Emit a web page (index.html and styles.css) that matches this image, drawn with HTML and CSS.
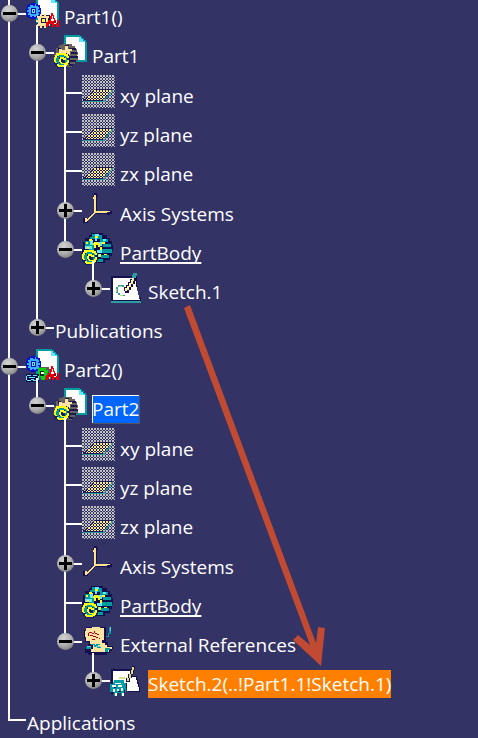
FILE: index.html
```html
<!DOCTYPE html>
<html lang="en">
<head>
  <meta charset="UTF-8">
  <meta name="viewport" content="width=device-width, initial-scale=1.0">
  <title>Specification tree</title>
  <link rel="stylesheet" href="styles.css">
</head>
<body>
<svg class="sprites" aria-hidden="true" shape-rendering="crispEdges">
  <defs>
    <pattern id="dither" width="3" height="3" patternUnits="userSpaceOnUse">
      <path fill="#c0c0c0" d="M0 0h2v2H0zM2 2h1v1H2z"/>
    </pattern>
    <pattern id="dither-khaki" width="3" height="3" patternUnits="userSpaceOnUse">
      <path fill="#1a1a55" d="M0 0h3v3H0z"/>
      <path fill="#ffe88c" d="M0 0h2v2H0zM2 2h1v1H2z"/>
    </pattern>

    <symbol id="paper" viewBox="0 0 33 33">
      <path fill="#009ca0" d="M10 0h16v1h2v2h2v2h2v2h1v20H10z"/>
      <path fill="#fff" d="M12 2h13v5h6v18H12z"/>
      <path fill="#62e6ff" d="M25 2h2v2h2v2h2v1h-6z"/>
    </symbol>

    <symbol id="gear-blue" viewBox="0 0 33 33">
      <path fill="#0010d0" d="M5 7h5v1h2v1h2v3h1v6h-1v3h-2v1h-2v1H5v-1H3v-1H1v-3H0v-6h1V9h2V8h2z"/>
      <path fill="#38b0ff" d="M6 9h1v1h2V8h1v2h2v1h1v2h-1v1h2v2h-2v1h1v2h-1v1h-2v1H8v-1H6v1H4v-2H2v-2h1v-1H1v-2h2v-1H2v-2h2V9h2z"/>
      <path fill="#0010a0" d="M5 12h5v6H5z"/>
      <path fill="#70e8ff" d="M6 13h3v4H6z"/>
      <path fill="#0010a0" d="M7 14h1v2H7z"/>
    </symbol>

    <symbol id="rig-red" viewBox="0 0 33 33">
      <path fill="#f00000" d="M25 17h2v2h1v3h1v2h4v7h-3v-2h-2v2h-2v-3h-2v2h-2v1h-2v-5h2v-2h2v-4h1z"/>
      <path fill="#fff" d="M26 20h1v3h1v2h-3v-2h1zM30 24h1v3h-1zM23 28h1v2h-1zM28 27h2v1h-2z"/>
      <path fill="#850020" d="M22 26h2v1h-2zM28 25h2v2h-2zM31 26h1v2h-1zM25 29h1v2h-1z"/>
    </symbol>

    <!-- yellow spiral at the lower left of part and body icons -->
    <symbol id="spiral" viewBox="0 0 33 33">
      <path fill="#102060" d="M4 18h9v1h2v2h1v8h-2v2h-2v2H3v-2H1v-2H0v-8h2v-2h2z"/>
      <path fill="#009ca0" d="M4 20h7v1h2v7h-2v2H4v-2H2v-6h2z"/>
      <path fill="#102060" d="M5 22h6v6H5z"/>
      <path fill="#ffff18" d="M4 18h8v1h2v2h1v2h-2v-1h-1v-1h-2v-1H5v1H3v2H2v4h1v1H1v-1H0v-5h1v-2h1v-2h2zM6 22h4v1h2v2H9v-1H7v3h1v1h4v-1h1v-2h2v3h-1v2h-1v1h-2v1H4v-1H3v-2h2v1h5v-1H7v-1H6v-1H5v-3h1z"/>
    </symbol>

    <symbol id="product" viewBox="0 0 33 33">
      <use href="#paper"/>
      <use href="#gear-blue"/>
      <path fill="#1c1748" d="M12 19h12v12H12z"/>
      <path fill="#ffe3a0" d="M14 18h2v2h2v-2h2v2h3v2h-1v2h2v2h-2v2h1v2h-3v2h-2v-2h-2v2h-2v-2h-3v-2h1v-2h-2v-2h2v-2h-1v-2h3z"/>
      <path fill="#1c1748" d="M15 22h5v5h-5z"/>
      <path fill="#ffff40" d="M16 23h3v3h-3z"/>
      <use href="#rig-red"/>
    </symbol>

    <symbol id="product-linked" viewBox="0 0 33 33">
      <use href="#paper"/>
      <use href="#gear-blue"/>
      <path fill="#5c5c60" d="M13 18h10v2h2v10H13z"/>
      <path fill="#10d010" d="M12 19h8v2h2v3h-1v3h-2v4h-4v-3h-3z"/>
      <path fill="#102c20" d="M14 22h4v5h-4z"/>
      <path fill="#fff" d="M15 23h3v2h-3z"/>
      <path fill="#001048" d="M0 25h13v8H0z"/>
      <path fill="#70e8ff" d="M1 26h4v1H1zM7 26h4v1H7zM0 27h1v4H0zM12 27h1v4h-1zM1 31h4v1H1zM7 31h4v1H7zM3 28h6v1H3zM5 30h3v1H5z"/>
      <use href="#rig-red"/>
    </symbol>

    <symbol id="part" viewBox="0 0 33 33">
      <use href="#paper"/>
      <path fill="#66645c" d="M8 9h10v2h3v3h2v3h1v3h-1v3h1v3h-3v3h-3v3H8v-4H2v-5H0v-5h2v-5h3v-3h3z"/>
      <path fill="#1b1850" d="M11 10h4v1h-4zM4 13h3v3H4zM15 13h7v2h-7zM17 17h6v2h-6zM16 21h8v2h-8zM16 25h6v2h-6zM15 29h4v2h-4z"/>
      <path fill="#ffe3a0" d="M11 11h3v3h4v2h-2v4h-3v-2H9v2H7v-2H5v-4h3v1h3z"/>
      <use href="#spiral"/>
    </symbol>

    <symbol id="plane" viewBox="0 0 33 33">
      <path fill="url(#dither)" d="M0 0h33v33H0z"/>
      <path fill="#1a1a55" d="M12 14h18v1H12zM1 24h20v2H1z"/>
      <path fill="url(#dither-khaki)" d="M12 15h17v2h-2v2h-2v2h-2v2h-2v2H4v-2h2v-2h2v-2h2v-2h2z"/>
      <path fill="#1a1a55" d="M10 16h2v1h-2zM8 18h2v1H8zM6 20h2v1H6zM4 22h2v1H4z"/>
      <path fill="#30979f" d="M1 26h20v1H1zM21 25h2v2h-2zM23 23h1v2h-1zM24 21h2v2h-2zM26 19h2v2h-2zM28 17h1v2h-1zM29 15h2v2h-2z"/>
    </symbol>

    <symbol id="axis" viewBox="0 0 33 33">
      <path fill="#140f50" d="M12 0h3v2h1v2h-5V2h1zM14 4h1v14h-1zM14 20h12v-3h2v1h2v3h-2v1h-3v-1H14zM1 25h2v3h3v2H1zM10 20h3v2h-3zM8 22h2v2H8z"/>
      <path fill="#ffe38c" d="M12 2h2v16h11v2H13v1h-1v1h-1v1h-1v1H9v1H8v1H7v1H6v1H5v1H3v-4h2v1h1v-1h1v-1h1v-1h1v-1h1v-1h1v-1h1zM11 4h1v2h-1zM25 18h3v1h-3z"/>
    </symbol>

    <symbol id="body" viewBox="0 0 33 33">
      <path fill="#101050" d="M9 1h12v2h4v3h3v3h2v4h1v6h-1v5h-2v4h-5v3H2v-4H0V17h1v-7h2V6h4V3h2z"/>
      <path fill="#009ca0" d="M10 2h3v5H8V5h2zM15 3h5v4h-5zM18 7h8v3h-8zM21 12h8v3h-8zM19 17h11v4H19zM19 23h8v3h-8zM15 27h6v3h-6zM3 9h5v5H3zM7 13h5v5H7z"/>
      <path fill="#68e8ff" d="M13 2h4v2h-2v5h-2zM8 8h3v5H8zM16 10h4v4h-4zM3 14h7v3H3zM15 18h5v3h-5zM14 22h3v3h-3zM21 7h3v2h-3z"/>
      <path fill="#ffff18" d="M13 4h3v2h-3zM7 7h3v2H7zM4 10h2v2H4zM12 10h4v1h2v4h-2v-2h-2v3h-2v-3h-1v-2h1zM5 15h2v2H5zM20 10h3v2h-3zM18 15h2v3h-2zM17 22h2v3h-2zM22 22h3v1h-3z"/>
      <use href="#spiral"/>
    </symbol>

    <symbol id="sketch" viewBox="0 0 33 33">
      <path fill="#15104f" d="M1 5h26v22h4v3H1z"/>
      <path fill="#fff" d="M3 7h23v9h1v4h1v4h1v4h1v1H3z"/>
      <path fill="#309ca0" d="M1 30h30v2H1z"/>
      <path fill="#309ca0" d="M8 14h6v2H8zM6 16h2v6H6zM8 22h2v2H8zM11 24h4v1h-4z"/>
      <path fill="#c8d880" d="M6 18h1v3H6zM9 15h3v1H9zM10 24h3v1h-3z"/>
      <path fill="#15104f" d="M22 6h4v4h-1v3h-2v3h-2v3h-2v3h-4v-2h-1v-4h2v-2h2v-3h2V8h2z"/>
      <path fill="#fff2a0" d="M22 7h2v3h-1v3h-2v3h-2v3h-2v1h-2v-3h2v-2h2v-3h2V9h1z"/>
      <path fill="#309ca0" d="M23 2h4v3h-1v2h-4V4h1z"/>
    </symbol>

    <symbol id="external" viewBox="0 0 33 33">
      <path fill="#15104f" d="M4 3h20v15h2v4h5v3h-1v2h-2v2h-3v2H6v-2H3v-5h3v-4h1v-2H3v-4H2V6h2z"/>
      <path fill="#ffe3a0" d="M4 4h6V3h8v1h4v12h-2v3h3v2h2v2h5v2h-3v3H9v-3h2v-5H8v-3H4v-4H3V7h1z"/>
      <path fill="#b00020" d="M7 8h3v1H7zM6 9h1v3H6zM10 9h2v1h-2zM12 7h1v2h2v1h-2V9h-1zM15 10h2v1h-2zM8 11h3v1H8zM11 12h3v1h-3zM14 13h2v1h-2zM17 14h1v1h-1zM10 15h3v1h-3z"/>
      <path fill="#009ca0" d="M27 3h2v7h-2v3h-3v-1h2V9h1zM9 20h4v1h3v2h3v1h-4v-1h-3v-2H9zM4 23h5v2H4zM14 20h4v1h-4zM23 24h5v2h-2v2h-3z"/>
      <path fill="#62d0e6" d="M28 3h1v4h-1zM5 22h4v1H5zM14 22h4v1h-4z"/>
    </symbol>

    <symbol id="sketch-external" viewBox="0 0 33 33">
      <path fill="#15104f" d="M1 6h21v7h5v3h1v4h1v4h1v5H18v-4H1z"/>
      <path fill="#fff" d="M3 8h18v6h5v3h1v4h1v3h1v4H17v-8H3z"/>
      <path fill="#15104f" d="M22 3h3v4h-1v4h-2v4h-2v4h-4v-4h2v-4h2V7h2z"/>
      <path fill="#e0dc80" d="M22 4h2v3h-1v4h-2v4h-2v3h-2v-3h2v-4h2V7h1zM9 14h6v2H9z"/>
      <path fill="#009ca0" d="M4 17h10v3h2v9h-2v4h-3v-3H7v3H4v-4H0v-8h3z"/>
      <path fill="#fff" d="M5 20h6v1H5zM2 22h4v2H2zM8 22h4v2H8zM3 26h2v3H3zM7 26h2v2H7zM11 25h2v3h-2zM5 30h2v3H5zM12 30h2v3h-2z"/>
      <path fill="#15104f" d="M4 24h2v1H4zM8 28h3v1H8zM1 29h2v2H1zM14 27h1v3h-1z"/>
    </symbol>
  </defs>
</svg>

<main class="viewer">
  <ul class="tree">
    <li>
      <div class="row"><button class="knob" aria-label="Collapse Part1()"></button><svg class="icon"><use href="#product"/></svg><span class="label">Part1()</span></div>
      <ul>
        <li>
          <div class="row"><button class="knob" aria-label="Collapse Part1"></button><svg class="icon"><use href="#part"/></svg><span class="label">Part1</span></div>
          <ul class="features">
            <li><div class="row"><svg class="icon"><use href="#plane"/></svg><span class="label">xy plane</span></div></li>
            <li><div class="row"><svg class="icon"><use href="#plane"/></svg><span class="label">yz plane</span></div></li>
            <li><div class="row"><svg class="icon"><use href="#plane"/></svg><span class="label">zx plane</span></div></li>
            <li><div class="row"><button class="knob plus" aria-label="Expand Axis Systems"></button><svg class="icon"><use href="#axis"/></svg><span class="label">Axis Systems</span></div></li>
            <li>
              <div class="row"><button class="knob" aria-label="Collapse PartBody"></button><svg class="icon"><use href="#body"/></svg><span class="label in-work">PartBody</span></div>
              <ul>
                <li><div class="row"><button class="knob plus" aria-label="Expand Sketch.1"></button><svg class="icon"><use href="#sketch"/></svg><span class="label">Sketch.1</span></div></li>
              </ul>
            </li>
          </ul>
        </li>
        <li><div class="row"><button class="knob plus" aria-label="Expand Publications"></button><span class="label">Publications</span></div></li>
      </ul>
    </li>
    <li>
      <div class="row"><button class="knob" aria-label="Collapse Part2()"></button><svg class="icon"><use href="#product-linked"/></svg><span class="label">Part2()</span></div>
      <ul>
        <li>
          <div class="row"><button class="knob" aria-label="Collapse Part2"></button><svg class="icon"><use href="#part"/></svg><span class="label active">Part2</span></div>
          <ul class="features">
            <li><div class="row"><svg class="icon"><use href="#plane"/></svg><span class="label">xy plane</span></div></li>
            <li><div class="row"><svg class="icon"><use href="#plane"/></svg><span class="label">yz plane</span></div></li>
            <li><div class="row"><svg class="icon"><use href="#plane"/></svg><span class="label">zx plane</span></div></li>
            <li><div class="row"><button class="knob plus" aria-label="Expand Axis Systems"></button><svg class="icon"><use href="#axis"/></svg><span class="label">Axis Systems</span></div></li>
            <li><div class="row"><svg class="icon"><use href="#body"/></svg><span class="label in-work">PartBody</span></div></li>
            <li>
              <div class="row"><button class="knob" aria-label="Collapse External References"></button><svg class="icon"><use href="#external"/></svg><span class="label">External References</span></div>
              <ul>
                <li><div class="row"><button class="knob plus" aria-label="Expand Sketch.2"></button><svg class="icon"><use href="#sketch-external"/></svg><span class="label selected">Sketch.2(..!Part1.1!Sketch.1)</span></div></li>
              </ul>
            </li>
          </ul>
        </li>
      </ul>
    </li>
    <li><div class="row"><span class="label">Applications</span></div></li>
  </ul>

  <!-- link from the source sketch to its external reference -->
  <svg class="arrow" viewBox="0 0 142 361" aria-hidden="true">
    <path d="M0 3 6 0 132 338 134 322 141 323 137 361 109 335 114 330 126 340Z"/>
  </svg>
</main>
</body>
</html>
```
FILE: styles.css
```css
* {
  box-sizing: border-box;
}

body {
  margin: 0;
  background: #333366;
  color: #fff;
  font-family: "Open Sans", "Noto Sans", sans-serif;
  font-size: 19px;
  line-height: 28px;
  overflow: hidden;
}

.sprites {
  position: absolute;
  width: 0;
  height: 0;
}

/* view is scrolled a few pixels past the top of the tree */
.viewer {
  position: relative;
  margin-top: -6px;
  display: flow-root;
}

ul {
  list-style: none;
  margin: 0;
  padding: 0;
}

li {
  position: relative;
}

li ul {
  padding-left: 28px;
}

.features {
  padding-top: 1px;
}

.features > li:nth-child(3) {
  padding-bottom: 1px;
}

/* trunk line */
li::before {
  content: "";
  position: absolute;
  left: 8px;
  top: -8px;
  bottom: 0;
  width: 2px;
  background: #fff;
}

li:last-child::before {
  bottom: auto;
  height: 28px;
}

.row {
  position: relative;
  display: flex;
  align-items: center;
  height: 39px;
  padding-left: 26px;
}

/* branch line */
.row::before {
  content: "";
  position: absolute;
  left: 8px;
  top: 19px;
  width: 18px;
  height: 2px;
  background: #fff;
}

.knob {
  position: relative;
  flex: none;
  width: 17px;
  height: 17px;
  margin-left: -25px;
  margin-right: 8px;
  padding: 0;
  border: none;
  border-radius: 50%;
  background: radial-gradient(circle at 40% 30%, #d4d4d4 0, #acacac 50%, #707070 90%);
  cursor: pointer;
}

.knob::before,
.knob.plus::after {
  content: "";
  position: absolute;
  left: 2px;
  top: 7px;
  width: 13px;
  height: 3px;
  background: #000;
}

.knob.plus::after {
  left: 7px;
  top: 2px;
  width: 3px;
  height: 13px;
}

.icon {
  flex: none;
  width: 33px;
  height: 33px;
  margin-right: 4px;
  margin-bottom: 2px;
}

.label {
  margin-top: 7px;
  margin-left: 1px;
  white-space: nowrap;
}

.in-work {
  text-decoration: underline 2px;
  text-underline-offset: 2px;
  text-decoration-skip-ink: none;
}

.active {
  background: #0066ff;
  box-shadow: inset 1px 1px #fff, 1px 1px #555;
}

.selected {
  background: #ff8000;
}

.arrow {
  position: absolute;
  left: 184px;
  top: 311px;
  width: 142px;
  height: 361px;
  fill: #c04a32;
  pointer-events: none;
}
```
